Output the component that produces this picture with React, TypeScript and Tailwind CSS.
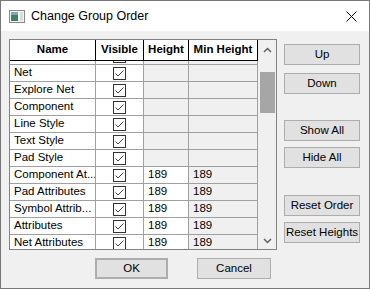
import React from "react";

type Row = { name: string; h?: string };

const rows: Row[] = [
  { name: "Net" },
  { name: "Explore Net" },
  { name: "Component" },
  { name: "Line Style" },
  { name: "Text Style" },
  { name: "Pad Style" },
  { name: "Component At...", h: "189" },
  { name: "Pad Attributes", h: "189" },
  { name: "Symbol Attrib...", h: "189" },
  { name: "Attributes", h: "189" },
  { name: "Net Attributes", h: "189" },
];

const Check = () => (
  <div className="w-[13px] h-[13px] border border-[#333333] bg-white flex items-center justify-center">
    <svg width="11" height="11" viewBox="0 0 11 11">
      <polyline points="1.5,5.5 4,8 9.5,2.5" fill="none" stroke="#444444" strokeWidth="1" />
    </svg>
  </div>
);

const GridRow = ({ row }: { row: Row }) => (
  <div className="flex h-[17px] border-b border-[#a0a0a0] shrink-0">
    <div className="w-[86px] border-r border-[#a0a0a0] bg-white pl-[4px] flex items-center whitespace-nowrap overflow-hidden">
      {row.name}
    </div>
    <div className="w-[48px] border-r border-[#a0a0a0] bg-white flex items-center justify-center">
      <Check />
    </div>
    <div
      className={
        row.h
          ? "w-[45px] border-r border-[#a0a0a0] bg-white pl-[4px] flex items-center"
          : "w-[45px] border-r border-[#a0a0a0] bg-[#f0f0f0]"
      }
    >
      {row.h}
    </div>
    <div className="w-[69px] border-r border-[#a0a0a0] bg-[#f0f0f0] pl-[4px] flex items-center">
      {row.h}
    </div>
  </div>
);

const Btn = ({ label, className = "" }: { label: string; className?: string }) => (
  <div
    className={
      "h-[21px] bg-[#e1e1e1] border border-[#adadad] flex items-center justify-center " + className
    }
  >
    {label}
  </div>
);

export default function App() {
  return (
    <div
      className="w-[370px] h-[289px] border border-[#777777] bg-[#f0f0f0] flex flex-col text-[11.5px] text-black"
      style={{ fontFamily: '"Liberation Sans", Arial, sans-serif' }}
    >
      {/* title bar */}
      <div className="h-[30px] bg-white flex items-center shrink-0">
        <svg width="16" height="13" viewBox="0 0 16 13" className="ml-[8px]">
          <rect x="0.5" y="0.5" width="15" height="12" fill="#f4f4f4" stroke="#8a8a8a" />
          <rect x="2" y="2" width="7" height="9" fill="#3f7f6a" />
          <rect x="2" y="2" width="7" height="3" fill="#7fa7b8" />
          <rect x="11" y="2" width="3" height="9" fill="#dcdcdc" />
        </svg>
        <span className="ml-[6px] text-[12.5px]">Change Group Order</span>
        <svg width="11" height="11" viewBox="0 0 11 11" className="ml-auto mr-[12px]">
          <path d="M0.5 0.5 L10.5 10.5 M10.5 0.5 L0.5 10.5" stroke="#000" strokeWidth="1" />
        </svg>
      </div>

      {/* body */}
      <div className="flex pl-[8px] pt-[8px]">
        <div className="w-[268px] h-[211px] border border-[#828282] bg-white flex overflow-hidden">
          <div className="w-[248px] flex flex-col overflow-hidden">
            <div className="flex h-[21px] border-b border-black bg-white font-bold shrink-0">
              <div className="w-[86px] border-r border-black flex items-center justify-center">Name</div>
              <div className="w-[48px] border-r border-black flex items-center justify-center">Visible</div>
              <div className="w-[45px] border-r border-black flex items-center justify-center">Height</div>
              <div className="w-[69px] border-r border-black flex items-center justify-center">Min Height</div>
            </div>
            <div className="h-[4px] overflow-hidden flex flex-col justify-end shrink-0">
              <GridRow row={{ name: "" }} />
            </div>
            {rows.map((r) => (
              <GridRow key={r.name} row={r} />
            ))}
          </div>
          <div className="w-[18px] bg-[#f0f0f0] flex flex-col items-center">
            <div className="h-[17px] flex items-center justify-center mt-[1px]">
              <svg width="9" height="6" viewBox="0 0 9 6">
                <polyline points="1,5 4.5,1.5 8,5" fill="none" stroke="#606060" strokeWidth="1.5" />
              </svg>
            </div>
            <div className="w-[15px] h-[41px] bg-[#a6a6a6] mt-[14px]" />
            <div className="mt-auto h-[17px] flex items-center justify-center">
              <svg width="9" height="6" viewBox="0 0 9 6">
                <polyline points="1,1 4.5,4.5 8,1" fill="none" stroke="#606060" strokeWidth="1.5" />
              </svg>
            </div>
          </div>
        </div>

        <div className="ml-[7px] w-[76px] flex flex-col pt-[5px]">
          <Btn label="Up" />
          <Btn label="Down" className="mt-[8px]" />
          <Btn label="Show All" className="mt-[26px]" />
          <Btn label="Hide All" className="mt-[6px]" />
          <Btn label="Reset Order" className="mt-[27px]" />
          <Btn label="Reset Heights" className="mt-[6px]" />
        </div>
      </div>

      {/* footer */}
      <div className="flex pl-[94px] mt-[8px]">
        <div className="w-[73px] h-[21px] bg-[#e1e1e1] border-2 border-[#adadad] flex items-center justify-center">
          OK
        </div>
        <Btn label="Cancel" className="w-[74px] ml-[29px]" />
      </div>
    </div>
  );
}
